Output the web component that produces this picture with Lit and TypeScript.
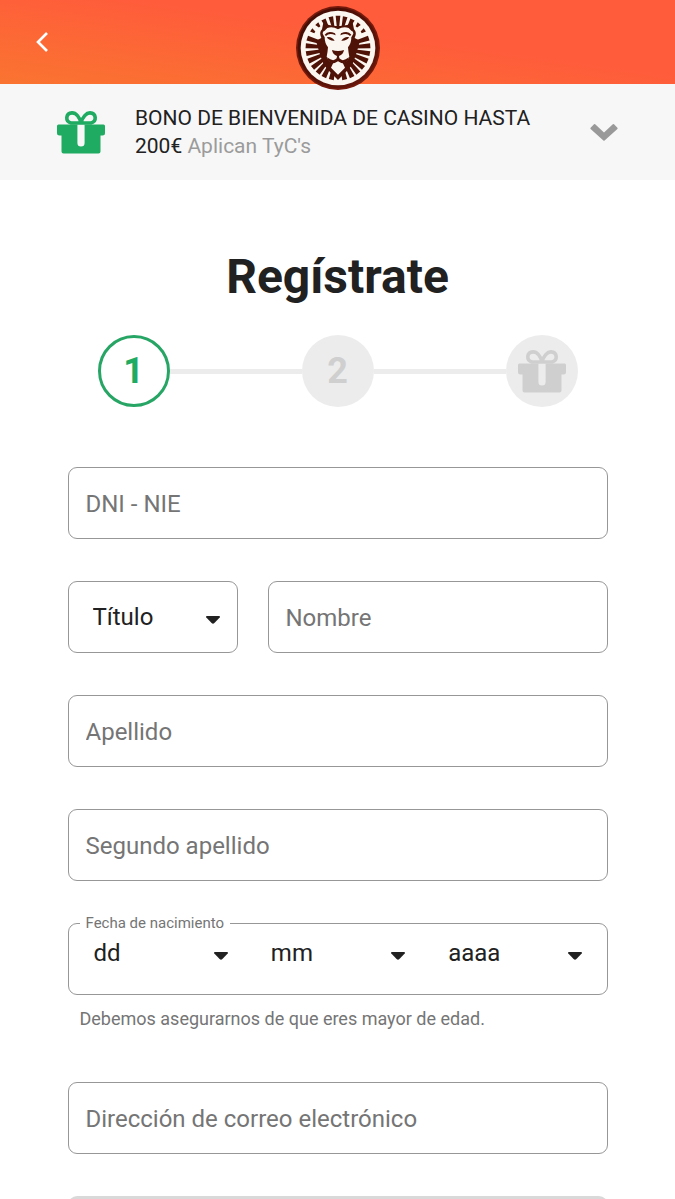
import { LitElement, html, css, svg } from "lit";
import { customElement, property } from "lit/decorators.js";

const gift = svg`
  <path fill-rule="evenodd" d="M1.5 13.500H20.400v18.400a3.600 3.600 0 0 0 7.200 0V13.500h18.900a1.500 1.500 0 0 1 1.500 1.500V22a2.500 2.500 0 0 1-2.500 2.500H43.500V40.500a2 2 0 0 1-2 2H6.500a2 2 0 0 1-2-2V24.500h-2A2.500 2.500 0 0 1 0 22v-7A1.500 1.500 0 0 1 1.500 13.500z"></path>
  <path fill="none" stroke="currentColor" stroke-width="3.600" stroke-linejoin="round" d="M24 12C22.500 6 19 1.800 15 1.900C8.500 2.200 8 10.500 14 12H34C40 10.500 39.500 2.200 33 1.900C29.500 1.800 25.500 6 24 12z"></path>`;

/** A tapered ray of the mane: angle in degrees clockwise from the top, inner and outer radius. */
const ray = (angle: number, inner: number, outer: number, half: number) => {
  const at = (r: number, off: number) => {
    const a = (angle * Math.PI) / 180;
    const x = 150 + r * Math.sin(a) + off * Math.cos(a);
    const y = 144 - r * Math.cos(a) + off * Math.sin(a);
    return `${x.toFixed(1)} ${y.toFixed(1)}`;
  };
  return `M${at(inner, -half / 2)}L${at(outer, -half)}L${at(outer, half)}L${at(inner, half / 2)}Z`;
};

const mirrored = (angles: number[], inner: number, outer: number, half: number) =>
  angles.map((a) => ray(a, inner, outer, half) + ray(-a, inner, outer, half)).join("");

const mane =
  mirrored([72, 86, 100, 114, 128, 141, 154, 168], 34, 97, 7.5) +
  ray(0, 62, 97, 7) +
  mirrored([13, 27], 62, 96, 7) +
  mirrored([41, 56], 84, 97, 6);

@customElement("lion-logo")
export class LionLogo extends LitElement {
  static styles = css`
    :host { display: block; }
    svg { display: block; width: 84px; height: 84px; }
  `;
  render() {
    return html`
      <svg viewBox="24 18 252 252" role="img" aria-label="Casino">
        <defs>
          <linearGradient id="rim" x1="0" y1="0" x2="1" y2="1">
            <stop offset="0" stop-color="#3d0b04"></stop>
            <stop offset="0.500" stop-color="#561107"></stop>
            <stop offset="1" stop-color="#6a180c"></stop>
          </linearGradient>
        </defs>
        <circle cx="150" cy="144" r="126" fill="#74190b"></circle>
        <circle cx="150" cy="144" r="121" fill="url(#rim)"></circle>
        <circle cx="150" cy="144" r="112" fill="#fbf6f0"></circle>
        <g fill="#4f1206">
          <path d=${mane}></path>
          <path d="M106 68Q128 80 150 78Q172 80 194 68L198 88Q208 98 200 114L216 122L204 164L192 196L176 214L150 240L124 214L108 196L96 164L84 122L100 114Q92 98 102 88Z"></path>
        </g>
        <path fill="#fbf6f0" d="M118 84Q134 78 150 88Q166 78 182 84L190 92Q197 94 196 101L190 112Q190 130 180 142Q181 156 184 170Q178 186 164 188L171 203L150 224L129 203L136 188Q122 186 116 170Q119 156 120 142Q110 130 110 112L104 101Q103 94 110 92Z"></path>
        <g fill="#4f1206">
          <path d="M110 104Q120 90 141 100L143 106Q124 97 114 108Z"></path>
          <path d="M190 104Q180 90 159 100L157 106Q176 97 186 108Z"></path>
          <path d="M116 112Q130 108 140 122Q124 123 116 112Z"></path>
          <path d="M184 112Q170 108 160 122Q176 123 184 112Z"></path>
          <path d="M132 150Q150 156 168 150Q166 163 153 168L154 175Q162 184 173 178L183 172Q178 192 160 189L150 184L140 189Q122 192 117 172L127 178Q138 184 146 175L147 168Q134 163 132 150Z"></path>
        </g>
      </svg>
    `;
  }
}

@customElement("select-box")
export class SelectBox extends LitElement {
  @property() label = "";
  @property() text = "";
  @property({ type: Array }) options: string[] = [];

  static styles = css`
    :host { display: block; min-width: 0; }
    .wrap { display: grid; align-items: center; height: 100%; }
    .control {
      grid-area: 1 / 1;
      appearance: none;
      width: 100%;
      height: 100%;
      margin: 0;
      padding: 0 42px 0 var(--inset, 22px);
      border: 0;
      background: transparent;
      color: #212121;
      font: 24px/32px Roboto, sans-serif;
    }
    .caret {
      grid-area: 1 / 1;
      justify-self: end;
      width: 14px;
      height: 8px;
      margin: 6px var(--caret-inset, 21px) 0 0;
      pointer-events: none;
      fill: #212121;
    }
  `;
  render() {
    return html`
      <div class="wrap">
        <select class="control" aria-label=${this.label}>
          <option value="">${this.text}</option>
          ${this.options.map((o) => html`<option>${o}</option>`)}
        </select>
        <svg class="caret" viewBox="0 0 14 8" aria-hidden="true"><path d="M1 0h12q1.500.200.700 1.400L8.400 7q-1.400 1.400-2.800 0L.3 1.400Q-.500.200 1 0z"></path></svg>
      </div>
    `;
  }
}

const range = (from: number, to: number) =>
  Array.from({ length: Math.abs(to - from) + 1 }, (_, i) => String(from < to ? from + i : from - i));

@customElement("app-root")
export class AppRoot extends LitElement {
  static styles = css`
    :host {
      display: block;
      height: 100vh;
      overflow-y: auto;
      scrollbar-width: none;
      background: #fff;
      color: #212121;
      font-family: Roboto, sans-serif;
    }
    * { box-sizing: border-box; }
    .header {
      display: grid;
      grid-template-columns: 1fr auto 1fr;
      align-items: center;
      height: 84px;
      padding: 0 24px;
      background: linear-gradient(8deg, #fa7430 0%, #ff5c3b 58%);
    }
    .back {
      display: grid;
      place-items: center;
      width: 36px;
      height: 36px;
      padding: 0;
      border: 0;
      background: none;
    }
    .back svg { width: 12px; height: 20px; }
    .logo { position: relative; top: 6px; }
    .bonus {
      display: flex;
      align-items: center;
      width: 100%;
      min-height: 96px;
      padding: 0 57px;
      border: 0;
      background: #f7f7f7;
      color: #212121;
      font: 21px/28px Roboto, sans-serif;
      text-align: left;
    }
    .gift { flex: none; width: 48px; height: 43px; fill: currentColor; }
    .bonus .gift { color: #1fab61; }
    .bonus-text { flex: 1; margin: 0 48px 0 30px; }
    .terms { color: #9b9b9b; }
    .chevron { flex: none; width: 28px; height: 18px; }
    .main { width: 80%; margin: 0 auto; padding: 69px 0 42px; }
    .title { margin: 0 0 30px; font-size: 48px; line-height: 56px; font-weight: 700; text-align: center; }
    .steps {
      display: flex;
      align-items: center;
      margin: 0 0 60px;
      padding: 0 30px;
      list-style: none;
    }
    .step {
      display: grid;
      place-items: center;
      flex: none;
      width: 72px;
      height: 72px;
      border-radius: 50%;
      background: #ececec;
      color: #cfcfcf;
      font-size: 36px;
      font-weight: 700;
      line-height: 42px;
    }
    .step.current { border: 3px solid #27a565; background: #fff; color: #1fab61; }
    .line { flex: 1; height: 5px; background: #ececec; }
    .form { display: grid; gap: 42px; }
    .row { display: grid; grid-template-columns: 1fr 2fr; gap: 30px; }
    .input, .boxed {
      width: 100%;
      height: 72px;
      border: 1px solid #979797;
      border-radius: 9px;
      background: #fff;
    }
    .input {
      padding: 2px 17px 0;
      color: #212121;
      font: 24px/32px Roboto, sans-serif;
    }
    .input::placeholder { color: #757575; opacity: 1; }
    .boxed { --inset: 24px; --caret-inset: 17px; }
    .dates {
      display: grid;
      grid-template-columns: repeat(3, 1fr);
      height: 72px;
      min-width: 0;
      margin: 0;
      padding: 0 3px 12px;
      border: 1px solid #979797;
      border-radius: 9px;
    }
    .legend {
      margin-left: 8px;
      padding: 0 6px;
      color: #757575;
      font-size: 15px;
      line-height: 1px;
    }
    .help { margin: 12px 0 9px; padding: 0 12px; color: #757575; font-size: 18px; line-height: 24px; }
    .submit {
      height: 72px;
      border: 0;
      border-radius: 9px;
      background: #d9d9d9;
      color: #fff;
      font: 700 24px/32px Roboto, sans-serif;
    }
  `;

  private field(label: string, type = "text") {
    return html`<input class="input" type=${type} placeholder=${label} aria-label=${label} />`;
  }

  private giftIcon() {
    return html`<svg class="gift" viewBox="0 0 48 43" aria-hidden="true">${gift}</svg>`;
  }

  render() {
    return html`
      <header class="header">
        <button class="back" aria-label="Volver">
          <svg viewBox="0 0 12 20" fill="none" stroke="#fff" stroke-width="2.600" aria-hidden="true"><path d="M11 1L2 10L11 19"></path></svg>
        </button>
        <lion-logo class="logo"></lion-logo>
      </header>
      <button class="bonus" aria-expanded="false">
        ${this.giftIcon()}
        <span class="bonus-text">BONO DE BIENVENIDA DE CASINO HASTA 200€ <span class="terms">Aplican TyC's</span></span>
        <svg class="chevron" viewBox="0 0 28 18" aria-hidden="true"><path fill="#999" d="M.6 4.800L4 1.200Q4.600.600 5.200 1.200L14 9.600L22.800 1.200Q23.400.600 24 1.200L27.400 4.800Q28 5.400 27.400 6L14.600 17.600Q14 18 13.400 17.600L.6 6Q0 5.400.6 4.800z"></path></svg>
      </button>
      <main class="main">
        <h1 class="title">Regístrate</h1>
        <ol class="steps">
          <li class="step current" aria-current="step">1</li>
          <li class="line" role="presentation"></li>
          <li class="step">2</li>
          <li class="line" role="presentation"></li>
          <li class="step">${this.giftIcon()}</li>
        </ol>
        <form class="form">
          ${this.field("DNI - NIE")}
          <div class="row">
            <select-box class="boxed" label="Título" text="Título" .options=${["Sr.", "Sra."]}></select-box>
            ${this.field("Nombre")}
          </div>
          ${this.field("Apellido")}
          ${this.field("Segundo apellido")}
          <div>
            <fieldset class="dates">
              <legend class="legend">Fecha de nacimiento</legend>
              <select-box label="Día" text="dd" .options=${range(1, 31)}></select-box>
              <select-box label="Mes" text="mm" .options=${range(1, 12)}></select-box>
              <select-box label="Año" text="aaaa" .options=${range(2005, 1925)}></select-box>
            </fieldset>
            <p class="help">Debemos asegurarnos de que eres mayor de edad.</p>
          </div>
          ${this.field("Dirección de correo electrónico", "email")}
          <button class="submit" type="button" disabled>Continuar</button>
        </form>
      </main>
    `;
  }
}
